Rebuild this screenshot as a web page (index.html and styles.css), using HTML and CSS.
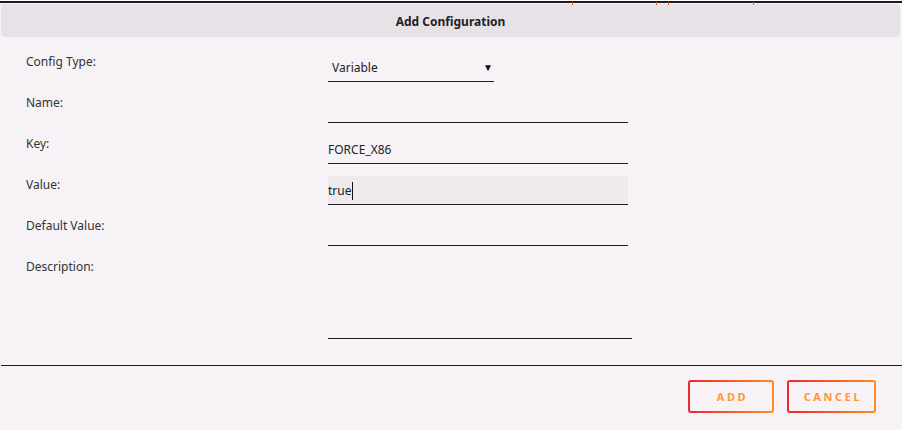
FILE: index.html
```html
<!DOCTYPE html>
<html>
<head>
<meta charset="utf-8">
<link rel="stylesheet" href="styles.css">
</head>
<body>
<div class="topline">
  <span class="tick t1"></span><span class="tick t2"></span><span class="tick t3"></span><span class="tick t4"></span>
</div>
<div class="dialog">
  <div class="header">Add Configuration</div>
  <div class="form">
    <div class="row first">
      <div class="label">Config Type:</div>
      <div class="select"><span>Variable</span><span class="arrow">▼</span></div>
    </div>
    <div class="row">
      <div class="label">Name:</div>
      <div class="field"></div>
    </div>
    <div class="row">
      <div class="label">Key:</div>
      <div class="field">FORCE_X86</div>
    </div>
    <div class="row">
      <div class="label">Value:</div>
      <div class="field focused">true<span class="caret"></span></div>
    </div>
    <div class="row">
      <div class="label">Default Value:</div>
      <div class="field"></div>
    </div>
    <div class="row">
      <div class="label">Description:</div>
      <div class="field area"></div>
    </div>
  </div>
  <div class="divider"></div>
  <div class="actions">
    <button class="btn add">ADD</button>
    <button class="btn cancel">CANCEL</button>
  </div>
</div>
</body>
</html>
```

FILE: styles.css
```css
* { box-sizing: border-box; }
html, body {
  margin: 0;
  padding: 0;
  background: #f6f2f6;
  font-family: "Noto Sans", "Open Sans", sans-serif;
  color: #333;
}
body { width: 902px; height: 430px; overflow: hidden; }
.topline {
  position: relative;
  height: 3px;
  border-top: 1px solid #fff;
  border-bottom: 2px solid #1c1c1c;
  background: #f6f2f6;
}
.tick {
  position: absolute;
  top: 1px;
  width: 1px;
  height: 3px;
  background: #e0602a;
}
.t1 { left: 572px; }
.t2 { left: 656px; }
.t3 { left: 668px; }
.t4 { left: 753px; }
.dialog { padding-top: 1px; }
.header {
  margin: 0 2px 0 1px;
  height: 33px;
  padding-top: 1px;
  background: #e7e2e7;
  border-radius: 4px;
  display: flex;
  align-items: center;
  justify-content: center;
  font-weight: bold;
  font-size: 12px;
  color: #222;
}
.form { padding-top: 16px; }
.row {
  display: flex;
  align-items: flex-start;
  margin-top: 12px;
}
.row.first { margin-top: 0; }
.label {
  width: 328px;
  padding-left: 26px;
  padding-top: 1px;
  font-size: 12px;
  line-height: 16px;
  color: #333;
}
.field, .select {
  height: 29px;
  border-bottom: 1px solid #1e1e1e;
  display: flex;
  align-items: center;
  font-size: 12px;
  color: #222;
}
.field { width: 300px; padding-top: 1px; }
.field.focused { background: #eeeaee; }
.field.area { width: 304px; height: 81px; }
.caret {
  display: inline-block;
  width: 1px;
  height: 18px;
  background: #111;
  margin-left: 1px;
}
.select {
  width: 166px;
  justify-content: space-between;
  padding: 0 0 0 4px;
}
.arrow {
  font-size: 10px;
  color: #111;
  padding-right: 1px;
}
.divider {
  margin: 26px 0 0 1px;
  height: 1px;
  background: #1e1e1e;
}
.actions {
  display: flex;
  justify-content: flex-end;
  gap: 13px;
  padding: 14px 26px 0 0;
}
.btn {
  height: 33px;
  border: 2px solid transparent;
  border-radius: 3px;
  background:
    linear-gradient(#f6f2f6, #f6f2f6) padding-box,
    linear-gradient(to right, #e82a2f, #ff8d1f) border-box;
  color: #ff9636;
  font-family: "Noto Sans", sans-serif;
  font-weight: bold;
  font-size: 11px;
  letter-spacing: 2.6px;
  padding: 0 0 0 3px;
  cursor: pointer;
}
.btn.add { width: 86px; }
.btn.cancel { width: 89px; }
```
